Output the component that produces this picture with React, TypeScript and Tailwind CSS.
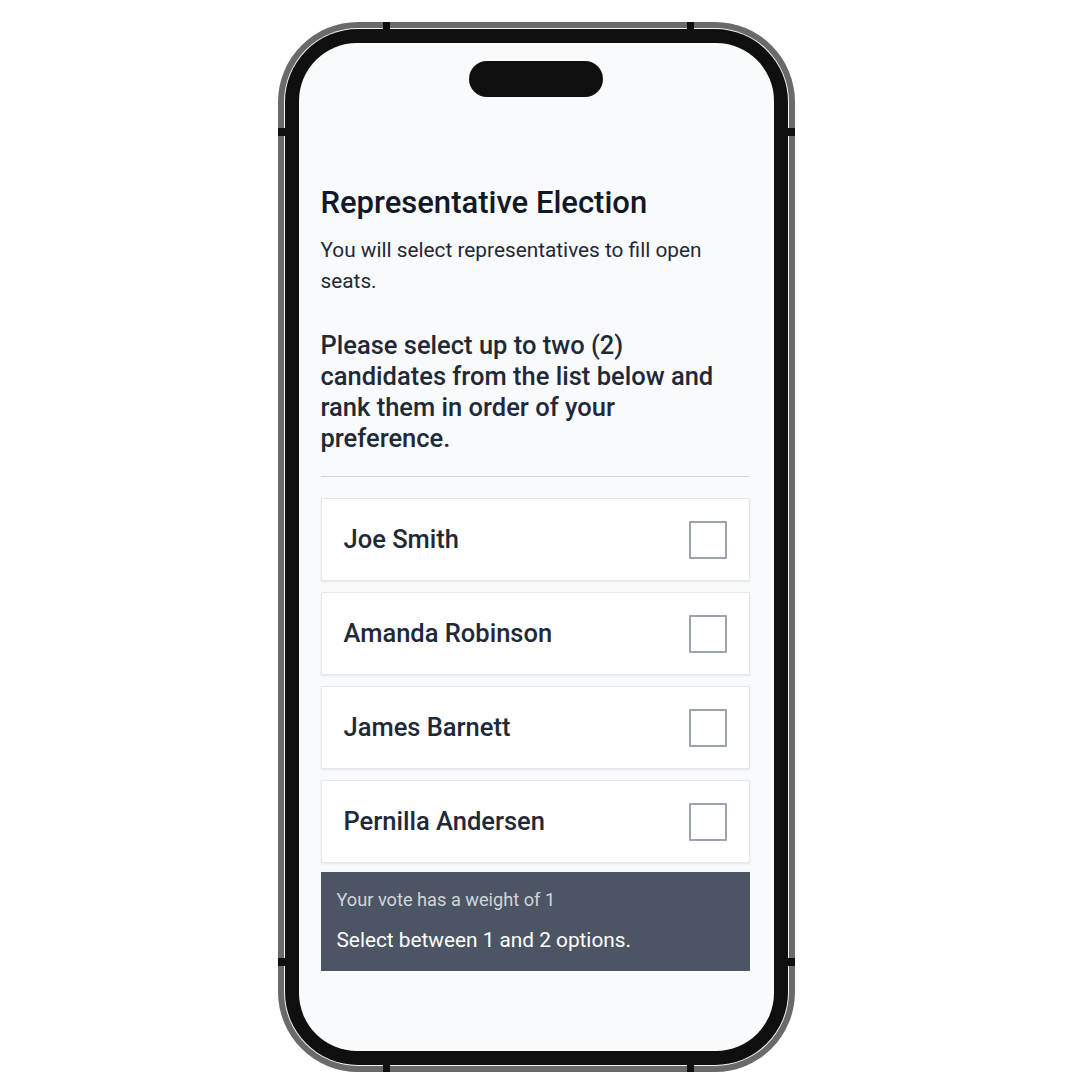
import React from "react";

const candidates = ["Joe Smith", "Amanda Robinson", "James Barnett", "Pernilla Andersen"];

function Tick() {
  return <div className="w-[7px] h-[8px] bg-[#0f0f0f]" />;
}

function SideTick() {
  return <div className="w-[8px] h-[8px] bg-[#0f0f0f]" />;
}

export default function App() {
  return (
    <div className="w-[1072px] h-[1090px] bg-white pt-[22px]" style={{ fontFamily: "Roboto, 'Noto Sans', sans-serif" }}>
      <div className="relative mx-auto w-[517px] h-[1050px]">
        <div className="h-full w-full rounded-[80px] bg-[#6a6a6a] p-[6px]">
          <div className="h-full w-full rounded-[74px] bg-[#f2f2f2] p-[1px]">
            <div className="h-full w-full rounded-[73px] bg-[#0f0f0f] p-[14px]">
              <div className="h-full w-full rounded-[58px] bg-[#f9fafb] overflow-hidden flex flex-col">
                <div className="mx-auto mt-[18px] w-[134px] h-[36px] rounded-full bg-[#0f0f0f] shrink-0" />
                <div className="pl-[22px] pr-[24px] pt-[88px]">
                  <h1 className="text-[31px] leading-[36px] font-medium text-[#111827]">Representative Election</h1>
                  <p className="mt-[14px] text-[20.8px] leading-[31px] text-[#1f2937]">
                    You will select representatives to fill open seats.
                  </p>
                  <p className="mt-[33px] text-[25.5px] leading-[31px] font-medium text-[#1f2937]">
                    Please select up to two (2) candidates from the list below and rank them in order of your preference.
                  </p>
                  <div className="mt-[22px] h-px bg-[#d1d5db]" />
                  <div className="mt-[21px] flex flex-col gap-[11px]">
                    {candidates.map((name) => (
                      <div
                        key={name}
                        className="h-[83px] bg-white border border-[#e5e7eb] shadow-[0_1px_2px_rgba(0,0,0,0.08)] flex items-center justify-between pl-[22px] pr-[22px]"
                      >
                        <span className="text-[25.5px] font-medium text-[#1f2937]">{name}</span>
                        <div className="w-[38px] h-[38px] border-2 border-[#9ca3af] rounded-[1px] bg-white" />
                      </div>
                    ))}
                  </div>
                  <div className="mt-[9px] bg-[#4b5563] pl-[16px] pt-[16px] pb-[17px]">
                    <div className="text-[18.2px] leading-[24px] text-[#d1d5db]">Your vote has a weight of 1</div>
                    <div className="mt-[14px] text-[20.8px] leading-[28px] text-white">Select between 1 and 2 options.</div>
                  </div>
                </div>
              </div>
            </div>
          </div>
        </div>
        {/* antenna bands lying over the frame */}
        <div className="absolute inset-x-0 top-0 flex justify-between pl-[105px] pr-[101px]">
          <Tick />
          <Tick />
        </div>
        <div className="absolute inset-x-0 bottom-0 flex justify-between pl-[105px] pr-[101px]">
          <Tick />
          <Tick />
        </div>
        <div className="absolute inset-0 flex flex-col justify-between pt-[106px] pb-[106px] pointer-events-none">
          <div className="flex justify-between">
            <SideTick />
            <SideTick />
          </div>
          <div className="flex justify-between">
            <SideTick />
            <SideTick />
          </div>
        </div>
      </div>
    </div>
  );
}
